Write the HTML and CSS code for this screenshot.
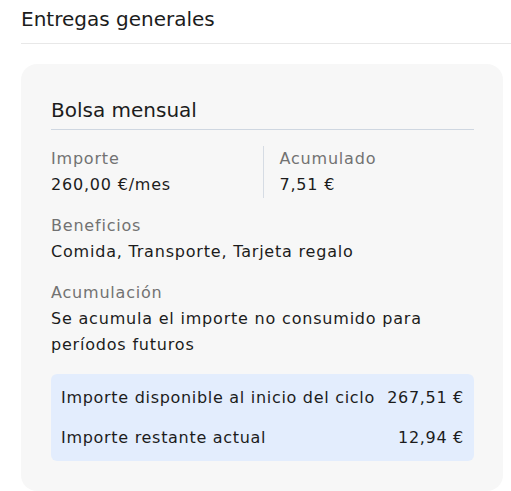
FILE: index.html
```html
<!DOCTYPE html>
<html lang="es">
<head>
<meta charset="utf-8">
<title>Entregas generales</title>
<link rel="stylesheet" href="styles.css">
</head>
<body>
<section class="section">
  <h2 class="section-title">Entregas generales</h2>
  <div class="card">
    <h3 class="card-title">Bolsa mensual</h3>
    <div class="fields">
      <div class="cols">
        <div class="field">
          <div class="label">Importe</div>
          <div class="value">260,00 €/mes</div>
        </div>
        <div class="field field-divided">
          <div class="label">Acumulado</div>
          <div class="value">7,51 €</div>
        </div>
      </div>
      <div class="field">
        <div class="label">Beneficios</div>
        <div class="value">Comida, Transporte, Tarjeta regalo</div>
      </div>
      <div class="field">
        <div class="label">Acumulación</div>
        <div class="value">Se acumula el importe no consumido para períodos futuros</div>
      </div>
    </div>
    <div class="summary">
      <div class="summary-row"><span>Importe disponible al inicio del ciclo</span><span>267,51 €</span></div>
      <div class="summary-row"><span>Importe restante actual</span><span>12,94 €</span></div>
    </div>
  </div>
</section>
</body>
</html>
```
FILE: styles.css
```css
html, body {
  margin: 0;
  padding: 0;
  background: #ffffff;
}
body {
  font-family: "DejaVu Sans", "Open Sans", sans-serif;
  color: #1c1c1c;
  font-size: 16px;
  line-height: 26px;
  letter-spacing: 0.8px;
}
.section {
  padding-left: 21px;
}
.section-title {
  margin: 0;
  font-size: 20px;
  font-weight: 400;
  line-height: 30px;
  letter-spacing: 0;
  padding: 4px 0 9px;
  border-bottom: 1px solid #e8e8e8;
  color: #1c1c1c;
}
.card {
  margin: 20px 8px 0 0;
  background: #f7f7f7;
  border-radius: 16px;
  padding: 31px 29px 30px 30px;
}
.card-title {
  margin: 0;
  font-size: 20px;
  font-weight: 400;
  line-height: 30px;
  letter-spacing: 0;
  padding-bottom: 4px;
  border-bottom: 1px solid #cfd7e1;
}
.fields {
  display: flex;
  flex-direction: column;
  gap: 15px;
  padding-top: 16px;
}
.cols {
  display: grid;
  grid-template-columns: 1fr 1fr;
}
.field-divided {
  border-left: 1px solid #d6dce4;
  padding-left: 16px;
}
.label {
  color: #727272;
}
.value {
  color: #1c1c1c;
}
.summary {
  margin-top: 16px;
  background: #e3edfd;
  border-radius: 6px;
  padding: 11px 10px 10px;
  display: flex;
  flex-direction: column;
  gap: 14px;
  letter-spacing: 0.7px;
}
.summary-row {
  display: flex;
  justify-content: space-between;
  gap: 8px;
  white-space: nowrap;
}
```
